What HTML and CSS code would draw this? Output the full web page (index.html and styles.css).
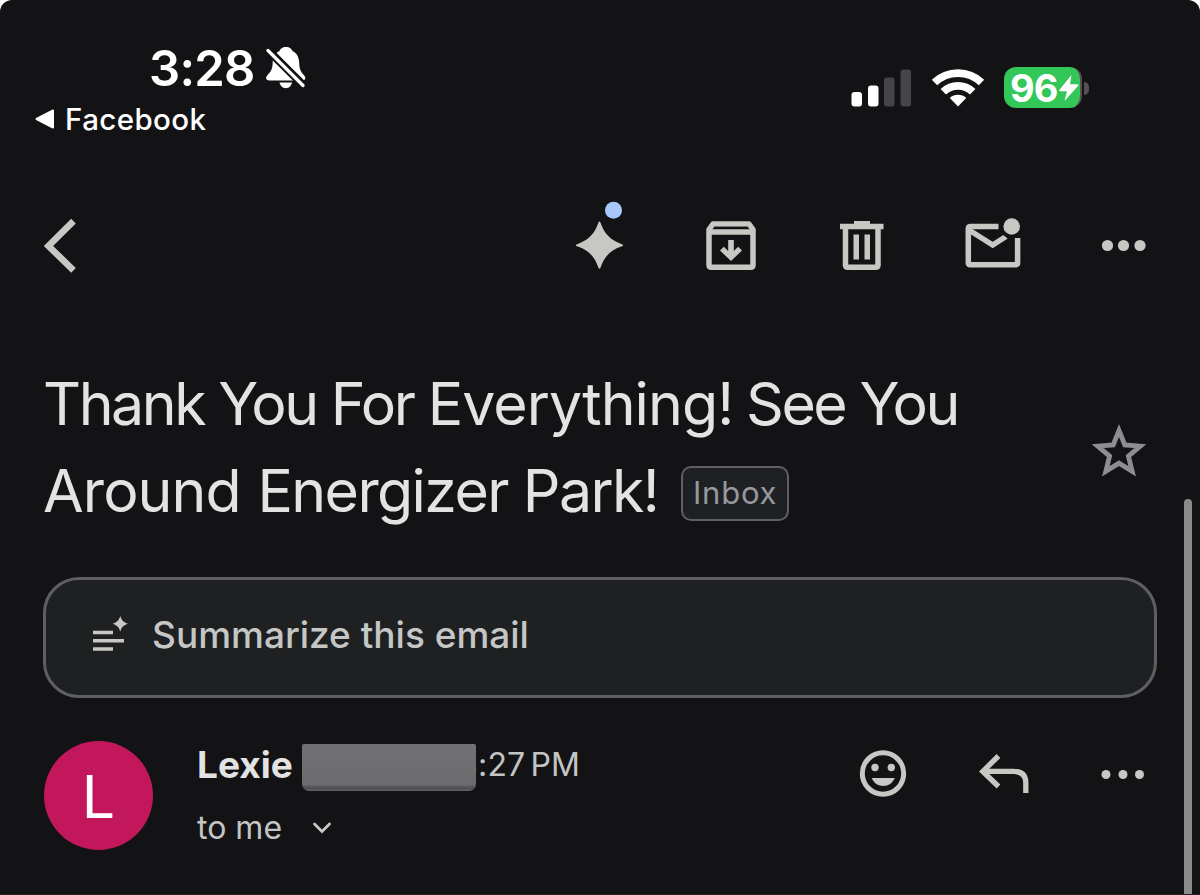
FILE: index.html
```
<!DOCTYPE html>
<html lang="en">
<head>
  <meta charset="UTF-8">
  <title>Thank You For Everything! See You Around Energizer Park!</title>
  <link rel="stylesheet" href="styles.css">
</head>
<body>

  <div class="screen">
    <div class="status-bar">
      <div class="status-left">
        <div class="clock">
          <span class="time">3:28</span>
          <svg class="bell" width="40" height="42" viewBox="0 0 40 42">
            <path fill="#fff" d="M20 0c3.800 0 5.500 2 6.500 4 5 2.500 6.500 7 6.700 12 .3 7 1.800 9 5 12.500 2.200 2.500 1 4.900-2 4.900H3.500c-3.300 0-4.500-2.500-2.300-4.900 3.600-4 5.200-6 5.500-12.500C6.900 10 8.500 6.300 13.500 4 14.500 2 16.200 0 20 0z"/>
            <path fill="#fff" d="M13.500 35.500h12.500c-1 4-3.300 5.700-6.200 5.700s-5.300-1.700-6.300-5.700z"/>
            <path stroke="#131315" stroke-width="8" d="M0 1l39 39"/>
            <path stroke="#fff" stroke-width="3.200" stroke-linecap="round" d="M2 3.500l35 35"/>
          </svg>
        </div>
        <div class="back-app">
          <svg width="20" height="20" viewBox="0 0 20 20"><path fill="#fff" stroke="#fff" stroke-width="2" stroke-linejoin="round" d="M1.500 10L18 1.500v17z"/></svg>
          <span>Facebook</span>
        </div>
      </div>
      <div class="status-right">
        <svg class="signal" width="60" height="38" viewBox="0 0 60 38">
          <rect x="0.500" y="23" width="10.500" height="14.500" rx="3" fill="#fff"/>
          <rect x="17" y="16.500" width="10.500" height="21" rx="3" fill="#fff"/>
          <rect x="33" y="8.500" width="10.500" height="29" rx="3" fill="#464648"/>
          <rect x="49.500" y="0.500" width="10.500" height="37" rx="3" fill="#464648"/>
        </svg>
        <svg class="wifi" width="54" height="40" viewBox="0 0 54 40">
          <g fill="none" stroke="#fff" stroke-width="7.800">
            <path d="M3.500 15.500a34 34 0 0 1 47 0"/>
            <path d="M12.300 24.700a21.200 21.200 0 0 1 29.400 0"/>
          </g>
          <path fill="#fff" d="M18.800 31a12 12 0 0 1 16.400 0L27 39.500z"/>
        </svg>
        <div class="battery">
          <span>96</span>
          <svg width="20" height="26" viewBox="0 0 20 26"><path fill="#fff" d="M12.500 0L.5 14.800c-.5.800 0 1.500.8 1.500H8L5.500 26 19.200 10.800c.6-.8.100-1.600-.8-1.600H11z"/></svg>
        </div>
        <div class="battery-nub"></div>
      </div>
    </div>

    <div class="toolbar">
      <svg class="back" width="80" height="80" viewBox="0 0 80 80"><path fill="none" stroke="#c7c8c4" stroke-width="6.600" d="M53.500 16.200L28.500 41l25 24.300"/></svg>
      <svg width="80" height="80" viewBox="0 0 80 80">
        <path fill="#c7c8c4" d="M39.500 16.500c.7 0 .9.700 1.200 1.800C44.500 29 50.500 35 61.200 38.900c1.200.3 1.800.6 1.800 1.300s-.6.900-1.800 1.200C50.500 45.300 44.500 51.300 40.700 62c-.3 1.200-.5 1.700-1.200 1.700s-1-.5-1.300-1.700C34.400 51.300 28.500 45.300 17.800 41.400c-1.200-.3-1.800-.5-1.800-1.200s.6-1 1.800-1.300C28.500 35 34.400 29 38.200 18.300c.3-1.100.6-1.800 1.300-1.800z"/>
        <circle cx="53.500" cy="5.300" r="8.500" fill="#a8c7fa"/>
      </svg>
      <svg width="80" height="80" viewBox="0 0 80 80">
        <path fill="none" stroke="#c7c8c4" stroke-width="5.500" stroke-linejoin="round" d="M18 24.500l4-5.500h36l4 5.500V60q0 2.300-2.300 2.300H20.300Q18 62.300 18 60z"/>
        <path fill="none" stroke="#c7c8c4" stroke-width="5.500" d="M18 27h44"/>
        <path fill="none" stroke="#131315" stroke-width="2" d="M23 22.800h34"/>
        <path fill="#c7c8c4" d="M37.200 35h5.600v11l4.400-4.200 3.800 3.700L40 56 29 45.500l3.800-3.700 4.400 4.200z"/>
      </svg>
      <svg width="80" height="80" viewBox="0 0 80 80">
        <path fill="none" stroke="#c7c8c4" stroke-width="5.500" d="M23.500 22v38q0 2.300 2.300 2.300h27.900q2.300 0 2.300-2.300V22M18 21.500h43.500"/>
        <path fill="#c7c8c4" d="M32 16h16v4H32zM31.500 29.500H37v25h-5.500zM42.500 29.500H48v25h-5.500z"/>
      </svg>
      <svg width="80" height="80" viewBox="0 0 80 80">
        <g fill="none" stroke="#c7c8c4" stroke-width="5.500">
          <path d="M45.500 21.500H17.600q-2.300 0-2.300 2.300V57.500q0 2.300 2.300 2.300h44.700q2.300 0 2.300-2.300V33"/>
          <path d="M16 25l23.700 15L53 31.500"/>
        </g>
        <circle cx="58.700" cy="21.500" r="12" fill="#131315"/>
        <circle cx="58.700" cy="21.500" r="8.300" fill="#c7c8c4"/>
      </svg>
      <svg width="80" height="80" viewBox="0 0 80 80" fill="#c7c8c4"><circle cx="23.500" cy="40.500" r="5.600"/><circle cx="39.500" cy="40.500" r="5.600"/><circle cx="56" cy="40.500" r="5.600"/></svg>
    </div>

    <div class="subject-row">
      <h1><span class="tight">Thank You For </span><span class="loose">Everything! </span><span class="tight">See You</span><br><span class="loose wide">Around </span><span class="normal">Energizer Park!</span><span class="label">Inbox</span></h1>
      <svg class="star" width="60" height="60" viewBox="0 0 60 60"><path fill="none" stroke="#8e8e90" stroke-width="4.800" d="M30 9.500l5.800 14.400 15.500 1.200-11.900 10 3.800 15.200L30 42.100l-13.200 8.200 3.800-15.200-11.900-10 15.500-1.200z"/></svg>
    </div>

    <div class="summary">
      <svg width="38" height="38" viewBox="0 0 38 38" fill="#c7c8c4">
        <path d="M1 14.800h20v3.500H1zM1 23h31v3.500H1zM1 31.200h20v3.500H1z"/>
        <path d="M28.300 0c1.300 4.300 3.300 6.300 7.700 7.700-4.400 1.400-6.400 3.300-7.700 7.700-1.400-4.400-3.400-6.300-7.700-7.700C24.900 6.300 26.900 4.300 28.300 0z"/>
      </svg>
      <span>Summarize this email</span>
    </div>

    <div class="message">
      <div class="avatar">L</div>
      <div class="sender">
        <div class="sender-top">
          <span class="name">Lexie</span>
          <span class="redacted"></span>
          <span class="sent">3:27<span class="pm">PM</span></span>
        </div>
        <div class="recipient">
          <span>to me</span>
          <svg width="20" height="14" viewBox="0 0 20 14"><path fill="none" stroke="#c7c8c4" stroke-width="2.800" stroke-linecap="round" d="M2.500 3l7.500 7.500L17.500 3"/></svg>
        </div>
      </div>
      <div class="actions">
        <svg width="60" height="60" viewBox="0 0 60 60">
          <circle cx="30" cy="30.500" r="20.700" fill="none" stroke="#c7c8c4" stroke-width="5"/>
          <circle cx="22" cy="24.500" r="3.700" fill="#c7c8c4"/>
          <circle cx="38.300" cy="24.500" r="3.700" fill="#c7c8c4"/>
          <path fill="#c7c8c4" d="M18.700 35h23c-2 5-6.300 8-11.500 8s-9.500-3-11.500-8z"/>
        </svg>
        <svg width="60" height="60" viewBox="0 0 60 60"><path fill="none" stroke="#c7c8c4" stroke-width="5.300" d="M25.500 13L9.800 28.400 25.500 43.500M10 28.400h30.500Q52.800 28.400 52.800 40v10"/></svg>
        <svg width="60" height="60" viewBox="0 0 60 60" fill="#c7c8c4"><circle cx="13" cy="31.500" r="4.500"/><circle cx="30" cy="31.500" r="4.500"/><circle cx="46.500" cy="31.500" r="4.500"/></svg>
      </div>
    </div>

    <div class="scrollbar"></div>
  </div>

</body>
</html>
```
FILE: styles.css
```
body {
  font-family: Inter, "Liberation Sans", sans-serif;
  background: white;
  margin: 0;
  overflow: hidden;
}
.screen {
  position: relative;
  box-sizing: border-box;
  height: 895px;
  background: #131315;
  border-radius: 12px 12px 0 0;
  border-bottom: 1px solid #242426;
  overflow: hidden;
}
svg {
  display: block;
  flex-shrink: 0;
}
.status-bar {
  display: flex;
  justify-content: space-between;
  height: 205px;
  color: white;
}
.status-left {
  padding: 39px 0 0 35px;
}
.clock {
  display: flex;
  padding-left: 114px;
}
.time {
  width: 117px;
  font-size: 49px;
  font-weight: 600;
  line-height: 60px;
  letter-spacing: -0.8px;
}
.bell {
  margin-top: 8px;
}
.back-app {
  display: flex;
  align-items: center;
  gap: 10px;
  font-size: 29.500px;
  font-weight: 500;
  line-height: 40px;
  letter-spacing: 0.4px;
}
.status-right {
  display: flex;
  align-items: flex-start;
  padding: 67px 111px 0 0;
}
.signal {
  margin: 2px 20px 0 0;
}
.wifi {
  margin-right: 19px;
}
.battery {
  display: flex;
  align-items: center;
  box-sizing: border-box;
  width: 78px;
  height: 41px;
  padding-left: 6px;
  border-right: 2px solid #5b4d52;
  border-radius: 12px;
  background: #33c759;
  font-size: 38px;
  font-weight: 700;
  letter-spacing: -1px;
}
.battery span {
  width: 49px;
}
.battery-nub {
  width: 5px;
  height: 13px;
  margin: 15px 0 0 2px;
  border-radius: 0 6px 6px 0;
  background: #535355;
}
.toolbar {
  display: flex;
  gap: 51px;
  padding: 0 36px 0 20px;
}
.toolbar svg {
  overflow: visible;
}
.toolbar .back {
  margin-right: auto;
}
.subject-row {
  display: flex;
  justify-content: space-between;
  height: 217px;
  padding: 75px 51px 0 43px;
}
h1 {
  margin: 0;
  color: #e3e3e3;
  font-size: 59px;
  font-weight: 400;
  line-height: 87px;
  white-space: nowrap;
}
.tight {
  letter-spacing: -2.450px;
}
.normal {
  letter-spacing: -1.600px;
}
.loose {
  letter-spacing: -0.9px;
  word-spacing: -3px;
}
.loose.wide {
  word-spacing: 1px;
}
.label {
  display: inline-block;
  box-sizing: border-box;
  width: 108px;
  height: 55px;
  margin-left: 23px;
  border: 2.500px solid #5f6063;
  border-radius: 10px;
  background: #1e2024;
  color: #95989f;
  font-size: 31px;
  line-height: 50px;
  letter-spacing: 0.8px;
  text-align: center;
  vertical-align: 8px;
}
.star {
  margin-top: 61px;
}
.summary {
  display: flex;
  box-sizing: border-box;
  height: 121px;
  margin: 0 43px;
  padding: 36px 0 0 46px;
  border: 3px solid #5e5f60;
  border-radius: 36px;
  background: #1f2021;
  color: #c4c7c5;
}
.summary span {
  margin-left: 22px;
  font-size: 37px;
  font-weight: 500;
  line-height: 38px;
}
.message {
  display: flex;
  padding: 43px 47px 0 44px;
}
.avatar {
  width: 109px;
  height: 109px;
  border-radius: 50%;
  background: #c2185b;
  color: white;
  font-size: 59px;
  line-height: 111px;
  text-align: center;
}
.sender {
  margin-left: 44px;
}
.sender-top {
  display: flex;
  height: 50px;
}
.name {
  width: 105px;
  color: #e3e3e3;
  font-size: 37px;
  font-weight: 700;
  line-height: 47px;
}
.redacted {
  z-index: 1;
  width: 174px;
  height: 47px;
  margin-top: 3px;
  border-radius: 2px 2px 7px 7px;
  background: linear-gradient(#717173 0, #6c6c6e 86%, #4d4d55 94%, #62636b 100%);
}
.sent {
  margin-left: -18px;
  color: #c4c4c4;
  font-size: 32px;
  line-height: 48px;
  letter-spacing: 0.2px;
}
.pm {
  margin-left: 5px;
}
.recipient {
  display: flex;
  align-items: center;
  gap: 30px;
  margin-top: 17px;
  color: #c4c4c4;
  font-size: 32px;
  line-height: 40px;
}
.actions {
  display: flex;
  gap: 60px;
  margin: 2px 0 0 auto;
}
.scrollbar {
  position: absolute;
  top: 499px;
  right: 8px;
  width: 8px;
  height: 420px;
  border-radius: 4px;
  background: #8a8a8b;
}
```
